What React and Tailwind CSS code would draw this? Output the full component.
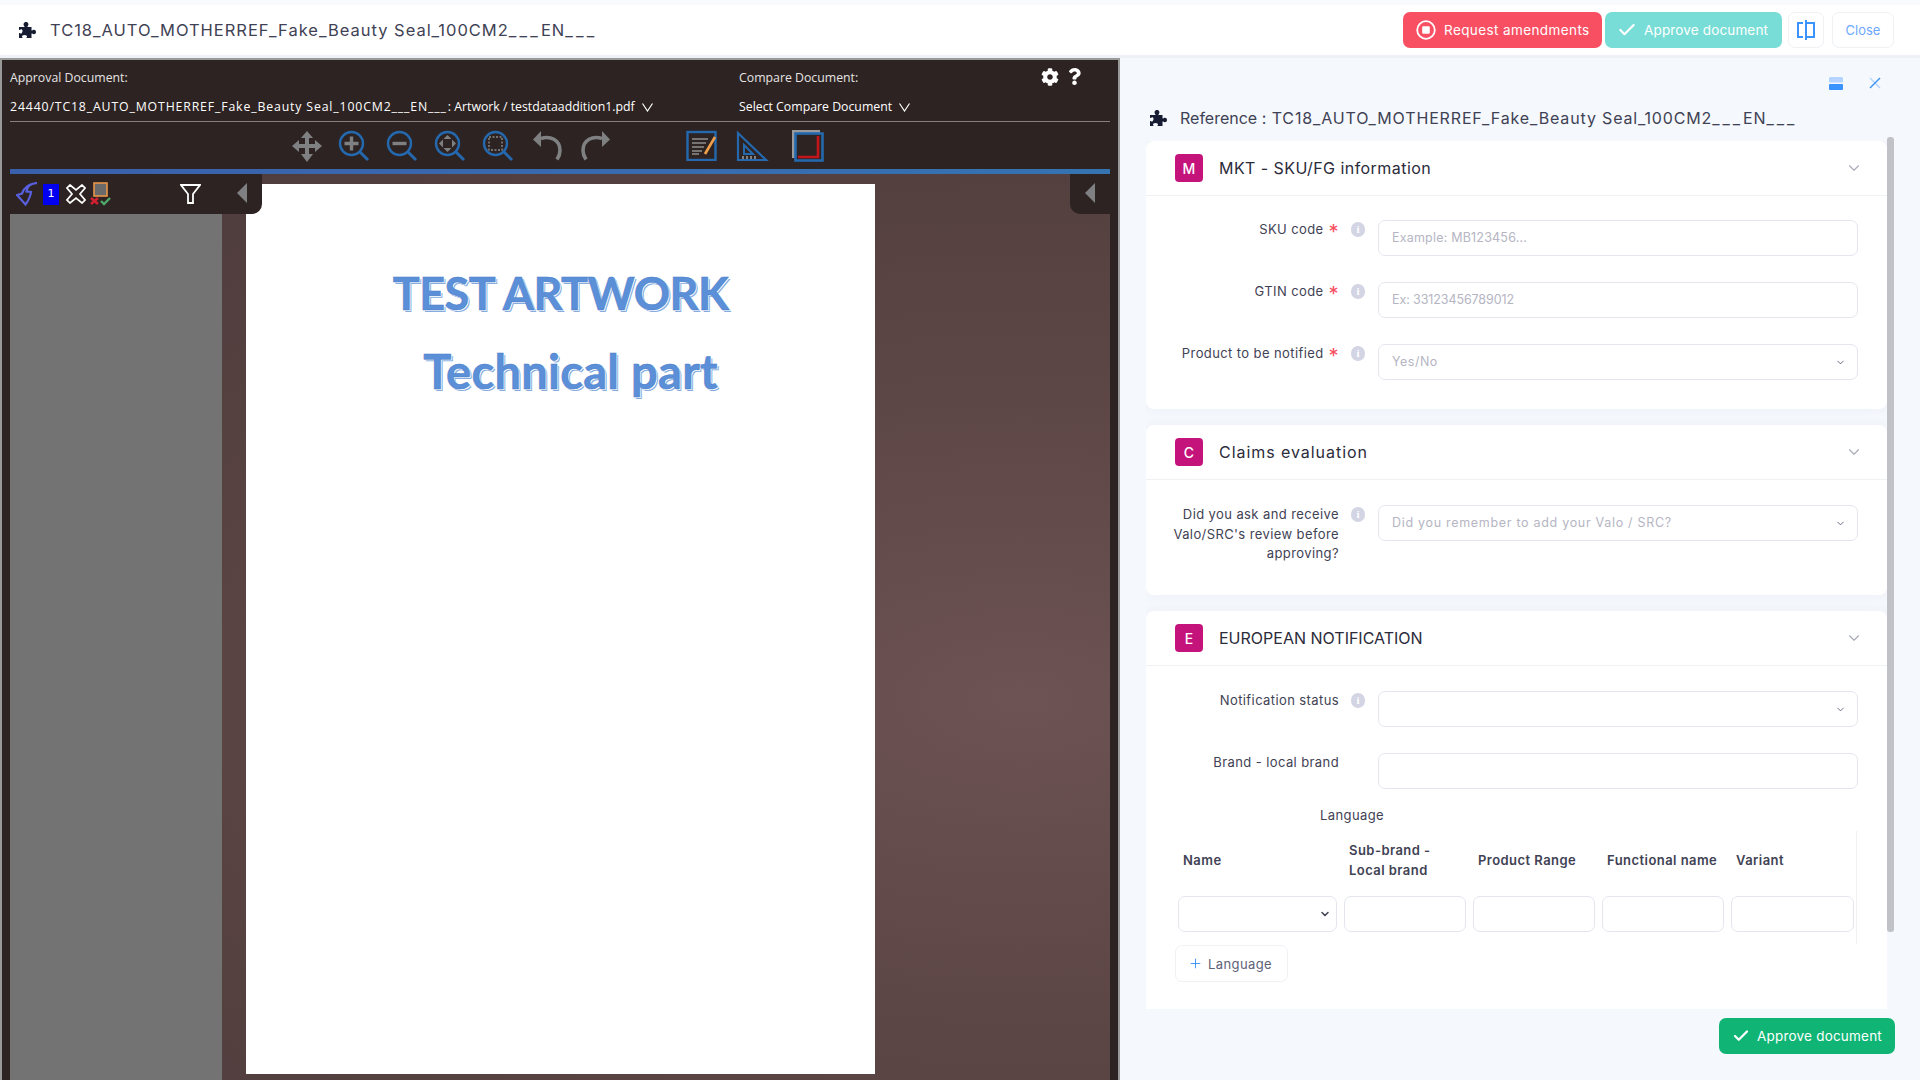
import { FaCog, FaQuestion } from "react-icons/fa";
import { ChevronDown, Check, Plus } from "lucide-react";

function PuzzleIcon({ className = "" }) {
  return (
    <svg width="18" height="18" viewBox="0 0 18 18" fill="#181c32" className={className}>
      <path d="M1 6h5c.6 0 .6-.6.2-1C5 3.800 5.500 1 8 1s3 2.800 1.800 4c-.4.400-.4 1 .2 1h3.500v3c0 .6.600.6 1 .3 1.200-1 3.500-.5 3.500 1.700s-2.300 2.700-3.500 1.700c-.4-.3-1-.3-1 .3V17H9c-.6 0-.6-.6-.2-1 .8-1-.3-2-2.300-2s-3.100 1-2.300 2c.4.400.4 1-.2 1H1v-4.500c0-.6.600-.6 1-.2 1 .8 2.500-.3 2.500-2.300S3 8 2 8.800c-.4.300-1 .3-1-.3z" />
    </svg>
  );
}

function ThinChevron() {
  return (
    <svg width="11" height="9" viewBox="0 0 11 9" fill="none" stroke="#fff" strokeWidth="1.2" className="ml-[7px]">
      <path d="M.5.5l5 7.5 5-7.500" />
    </svg>
  );
}

function MagnifierIcon({ children }) {
  return (
    <svg width="32" height="32" viewBox="0 0 32 32" fill="none">
      <circle cx="13.5" cy="13.5" r="11.5" stroke="#2468ae" strokeWidth="2.4" />
      <path d="M22 22l8 8" stroke="#2468ae" strokeWidth="3" />
      {children}
    </svg>
  );
}

function ToolbarIcons() {
  return (
    <div className="flex h-[47px] items-center pl-[272px]">
      <svg width="32" height="32" viewBox="0 0 32 32" fill="#7f8081" className="mr-[15px] ml-[9px]">
        <path d="M16 1l6 7h-4v6h6v-4l7 6-7 6v-4h-6v6h4l-6 8-6-8h4v-6H8v4l-7-6 7-6v4h6V8h-4z" />
      </svg>
      <MagnifierIcon>
        <path d="M13.5 6.5v14M6.5 13.5h14" stroke="#7f8081" strokeWidth="3.4" />
      </MagnifierIcon>
      <div className="w-[16px]" />
      <MagnifierIcon>
        <path d="M6.5 13.5h14" stroke="#7f8081" strokeWidth="3.4" />
      </MagnifierIcon>
      <div className="w-[16px]" />
      <MagnifierIcon>
        <path d="M13.5 5l4 4h-8zM13.5 22l4-4h-8zM5 13.5l4-4v8zM22 13.5l-4-4v8z" fill="#7f8081" />
      </MagnifierIcon>
      <div className="w-[16px]" />
      <MagnifierIcon>
        <rect x="7" y="7" width="13" height="13" stroke="#8a8a8a" strokeWidth="1.4" strokeDasharray="2 1.5" />
      </MagnifierIcon>
      <div className="w-[18px]" />
      <svg width="31" height="31" viewBox="0 0 31 31" fill="none">
        <path d="M9 8.5c9-3 19 1 19 12 0 3-1 6-3 9" stroke="#7f8081" strokeWidth="3.6" />
        <path d="M1 9.5L9 1v16z" fill="#7f8081" />
      </svg>
      <div className="w-[17px]" />
      <svg width="31" height="31" viewBox="0 0 31 31" fill="none">
        <path d="M22 8.5c-9-3-19 1-19 12 0 3 1 6 3 9" stroke="#7f8081" strokeWidth="3.6" />
        <path d="M30 9.5L22 1v16z" fill="#7f8081" />
      </svg>
      <div className="w-[75px]" />
      <svg width="31" height="31" viewBox="0 0 31 31" fill="none">
        <rect x="1.5" y="2" width="28" height="28" stroke="#2468ae" strokeWidth="2.4" />
        <path d="M6 9h16M6 13h14M6 17h12M6 21h10M6 24h7" stroke="#8f8f8f" strokeWidth="1.6" />
        <path d="M29 7L19 24" stroke="#f0a04b" strokeWidth="2.6" />
      </svg>
      <div className="w-[19px]" />
      <svg width="33" height="32" viewBox="0 0 33 32" fill="none">
        <path d="M2 3v27h28z" stroke="#2468ae" strokeWidth="2.2" />
        <path d="M8 15v9h9z" stroke="#2468ae" strokeWidth="2" />
        <path d="M7 26v3M11 26v3M15 26v3M19 26v3" stroke="#9a9a9a" strokeWidth="1.6" />
      </svg>
      <div className="w-[22px]" />
      <svg width="33" height="33" viewBox="0 0 33 33" fill="none">
        <rect x="1" y="1" width="28" height="28" fill="#9a9a9a" />
        <rect x="4.5" y="4.5" width="27" height="27" fill="#2d2322" stroke="#2468ae" strokeWidth="2.6" />
        <path d="M27 7v21H7" stroke="#c3161c" strokeWidth="2.6" />
      </svg>
    </div>
  );
}

function LeftFlyout() {
  return (
    <div className="absolute top-0 left-0 flex h-[40px] w-[252px] items-center rounded-br-[10px] bg-[#2d2322]">
      <svg width="22" height="24" viewBox="0 0 22 24" fill="none" className="ml-[6px]">
        <path d="M21 1c-6 .5-10 3-10.500 8.500l4.500.5c-.5 5-3 9-5.500 12.500L1 13l5-1.500C8 6 13 1.500 21 1z" stroke="#5860e0" strokeWidth="2.2" />
      </svg>
      <span className="ml-[5px] flex h-[21px] w-[16px] items-center justify-center bg-[#0000f0] font-['DejaVu_Sans'] text-[11px] text-white">
        1
      </span>
      <svg width="20" height="20" viewBox="0 0 20 20" fill="none" className="ml-[7px]">
        <path d="M4 1l6 5 6-5 3 3-5 6 5 6-3 3-6-5-6 5-3-3 5-6-5-6z" stroke="#fff" strokeWidth="1.7" />
      </svg>
      <svg width="22" height="24" viewBox="0 0 22 24" fill="none" className="ml-[4px]">
        <rect x="4" y="1" width="13" height="13" fill="#6a6a6a" stroke="#e89548" strokeWidth="1.6" />
        <path d="M1 16l7 6M8 16l-7 6" stroke="#d01f2f" strokeWidth="2.6" />
        <path d="M11 19l3 3 6-6" stroke="#4fa868" strokeWidth="2.4" />
      </svg>
      <svg width="21" height="20" viewBox="0 0 21 20" fill="none" className="ml-[68px]">
        <path d="M1 1h19l-7 9v9H8v-9z" stroke="#fff" strokeWidth="1.8" />
      </svg>
      <svg width="10" height="20" viewBox="0 0 10 20" className="mb-[3px] ml-[36px]">
        <path d="M10 0v20L0 10z" fill="#7f8081" />
      </svg>
    </div>
  );
}

function DocumentViewer() {
  return (
    <div className="flex w-[1120px] flex-col border-t-2 border-r-2 border-l-2 border-[#9a9a9a] bg-[#2d2322] pr-[8px] pl-[8px]">
      <div className="flex h-[62px] border-b border-[#85807f] font-['Open_Sans',sans-serif] text-[12.3px] text-white">
        <div className="w-[729px]">
          <div className="mt-[8px] h-[20px] leading-[20px] text-[#e5e3e3]">Approval Document:</div>
          <div className="mt-[9px] flex items-center leading-[20px]">
            <span className="tracking-[0.85px]">24440/TC18_AUTO_MOTHERREF_Fake_Beauty Seal_100CM2___EN___</span>
            <span className="ml-[1px]">: Artwork / testdataaddition1.pdf</span>
            <ThinChevron />
          </div>
        </div>
        <div className="w-[302px]">
          <div className="mt-[8px] h-[20px] leading-[20px] text-[#e5e3e3]">Compare Document:</div>
          <div className="mt-[9px] flex items-center leading-[20px]">
            Select Compare Document
            <ThinChevron />
          </div>
        </div>
        <div className="mt-[8px] flex items-start">
          <FaCog size={18} />
          <FaQuestion size={17} className="ml-[7px]" />
        </div>
      </div>
      <ToolbarIcons />
      <div className="h-[5px] bg-gradient-to-r from-[#3a60ab] to-[#3573b1]" />
      <div className="relative flex flex-1 overflow-hidden bg-[radial-gradient(ellipse_at_92%_58%,#6d5353_0%,#5c4545_45%,#4c3a3a_100%)]">
        <div className="mt-[40px] w-[212px] bg-[#737373]" />
        <div className="mt-[10px] ml-[24px] h-[890px] w-[629px] bg-white pt-[86px] font-['Lato',sans-serif] font-bold text-[#5b8fd8] [-webkit-text-stroke:0.5px_#4a7fc8] [text-shadow:1px_1px_0_#fff,2px_2px_0_#86acdf]">
          <p className="text-center text-[45px] leading-[46px] tracking-[-0.5px]">TEST ARTWORK</p>
          <p className="mt-[32px] pl-[20px] text-center text-[47px] leading-[46px] tracking-[0.3px]">Technical part</p>
        </div>
        <LeftFlyout />
        <div className="absolute top-0 right-0 flex h-[40px] w-[40px] items-center rounded-bl-[10px] bg-[#2d2322] pl-[15px]">
          <svg width="10" height="20" viewBox="0 0 10 20" className="mb-[3px]">
            <path d="M10 0v20L0 10z" fill="#7f8081" />
          </svg>
        </div>
      </div>
    </div>
  );
}

function InfoDot() {
  return (
    <span className="mt-[2px] flex h-[15px] w-[14px] shrink-0 items-center justify-center rounded-full bg-[#d3d5e4] font-['Liberation_Serif',serif] text-[11px] font-bold text-white">
      i
    </span>
  );
}

function Field({ label, required, info = true, placeholder, select, placeholderClass = "tracking-[0.2px]" }) {
  return (
    <div className="flex items-start">
      <div className="w-[193px] shrink-0 pl-[18px] text-right text-[13px] leading-[19.5px] tracking-[0.4px] text-[#3f4254]">
        {label}
        {required && (
          <span className="ml-[5px] inline-block h-[12px] align-top text-[20px] leading-[24px] text-[#f64e60]">*</span>
        )}
      </div>
      <div className="ml-[12px] w-[14px] shrink-0">{info && <InfoDot />}</div>
      <div className="ml-[13px] flex h-[36px] w-[480px] items-center justify-between rounded-[7px] border border-[#e4e6ef] bg-white pr-[11px] pl-[13px] text-[12.5px] text-[#b5b5c3]">
        <span className={placeholderClass}>{placeholder}</span>
        {select && <ChevronDown size={11} strokeWidth={2} className="text-[#5e6278]" />}
      </div>
    </div>
  );
}

function Card({ letter, title, height, titleClass, children }) {
  return (
    <div className={`flex shrink-0 flex-col rounded-[8px] bg-white shadow-[0_0_12px_rgba(82,63,105,0.05)] ${height}`}>
      <div className="flex h-[55px] shrink-0 items-center border-b border-[#eff2f5] pr-[24px] pl-[29px]">
        <span className="flex h-[28px] w-[28px] items-center justify-center rounded-[4px] bg-[#c4137b] text-[14px] font-medium text-white">
          {letter}
        </span>
        <span className={`ml-[16px] flex-1 text-[16px] text-[#2b2b3a] ${titleClass}`}>{title}</span>
        <ChevronDown size={18} strokeWidth={1.5} className="text-[#a9abb8]" />
      </div>
      {children}
    </div>
  );
}

function LanguageTable() {
  const headers = [
    { text: "Name", w: "w-[159px]" },
    { text: "Sub-brand - Local brand", w: "w-[122px]", inset: "pr-[20px]" },
    { text: "Product Range", w: "w-[122px]" },
    { text: "Functional name", w: "w-[122px]" },
    { text: "Variant", w: "w-[123px]" },
  ];
  return (
    <div className="ml-[32px] h-[113px] w-[679px] border-r border-[#eff2f5]">
      <div className="flex h-[58px] items-center gap-[7px] text-[13px] leading-[20px] font-semibold tracking-[0.45px] text-[#3f4254]">
        {headers.map((h) => (
          <div key={h.text} className={`${h.w} shrink-0 pl-[5px] ${h.inset ?? "whitespace-nowrap"}`}>
            {h.text}
          </div>
        ))}
      </div>
      <div className="mt-[7px] flex gap-[7px]">
        {headers.map((h, i) => (
          <div
            key={h.text}
            className={`flex h-[36px] items-center justify-end rounded-[7px] border border-[#e4e6ef] bg-white pr-[5px] ${h.w}`}
          >
            {i === 0 && <ChevronDown size={12} strokeWidth={3} className="text-[#3f4254]" />}
          </div>
        ))}
      </div>
    </div>
  );
}

function ReferencePanel() {
  return (
    <div className="relative flex flex-1 flex-col overflow-hidden bg-[#f5f8fd]">
      <div className="flex h-[44px] shrink-0 items-start justify-end pt-[19px] pr-[39px]">
        <svg width="14" height="13" viewBox="0 0 14 13" className="mr-[26px]">
          <rect width="14" height="5.5" rx="1" fill="#b5d4ff" />
          <rect y="7" width="14" height="6" rx="1" fill="#3b93fd" />
        </svg>
        <svg width="12" height="12" viewBox="0 0 12 12" fill="none" strokeWidth="1.4">
          <path d="M1 1l10 10" stroke="#b5d4ff" />
          <path d="M11 1L1 11" stroke="#3b93fd" />
        </svg>
      </div>
      <div className="mb-[7px] flex h-[32px] shrink-0 items-center pl-[29px] text-[16px] tracking-[0.85px] text-[#3f4254]">
        <PuzzleIcon />
        <span className="ml-[13px]">
          <span className="tracking-[0px]">Reference :</span> TC18_AUTO_MOTHERREF_Fake_Beauty Seal_100CM2
          <span className="tracking-[3px]">___</span>EN<span className="tracking-[3px]">___</span>
        </span>
      </div>
      <div className="ml-[26px] flex h-[868px] w-[741px] shrink-0 flex-col gap-[16px] overflow-hidden">
        <Card letter="M" title="MKT - SKU/FG information" height="h-[268px]" titleClass="tracking-[0.45px]">
          <div className="flex flex-col gap-[26px] pt-[24px]">
            <Field label="SKU code" required placeholder="Example: MB123456..." />
            <Field label="GTIN code" required placeholder="Ex: 33123456789012" placeholderClass="tracking-[-0.1px]" />
            <Field label="Product to be notified" required placeholder="Yes/No" select placeholderClass="tracking-[0.5px]" />
          </div>
        </Card>
        <Card letter="C" title="Claims evaluation" height="h-[170px]" titleClass="tracking-[0.95px]">
          <div className="pt-[25px]">
            <Field
              label="Did you ask and receive Valo/SRC's review before approving?"
              placeholder="Did you remember to add your Valo / SRC?"
              placeholderClass="tracking-[0.7px]"
              select
            />
          </div>
        </Card>
        <Card letter="E" title="EUROPEAN NOTIFICATION" height="h-[420px]" titleClass="text-[15.3px]">
          <div className="flex flex-col gap-[26px] pt-[25px]">
            <Field label="Notification status" select />
            <Field label="Brand - local brand" info={false} />
          </div>
          <div className="mt-[16px] mb-[6px] ml-[174px] text-[13px] leading-[20px] tracking-[0.4px] text-[#3f4254]">
            Language
          </div>
          <LanguageTable />
          <button
            type="button"
            className="mt-[1px] ml-[29px] flex h-[37px] w-[113px] items-center rounded-[7px] border border-[#eff2f5] bg-white pt-[2px] pl-[12px] text-[13px] tracking-[0.4px] text-[#5e6278]"
          >
            <Plus size={15} strokeWidth={1.5} className="mr-[5px] mb-[2px] text-[#3b93fd]" />
            Language
          </button>
        </Card>
      </div>
      <div className="flex flex-1 items-start justify-end pt-[9px] pr-[25px]">
        <button
          type="button"
          className="flex h-[36px] w-[176px] items-center justify-center rounded-[7px] bg-[#10b575] text-[13.5px] tracking-[0.2px] text-white"
        >
          <Check size={18} strokeWidth={3} className="mr-[7px]" />
          Approve document
        </button>
      </div>
      <div className="absolute top-[79px] left-[767px] h-[795px] w-[7px] rounded-[3px] bg-[#c0c2c8]" />
    </div>
  );
}

export default function App() {
  return (
    <div className="flex h-screen w-full flex-col overflow-hidden bg-white font-['Inter',sans-serif]">
      <header className="flex h-[58px] shrink-0 items-center border-t-[5px] border-b-[3px] border-t-[#f8fafd] border-b-[#eef1f8] bg-white pr-[26px] pl-[18px]">
        <PuzzleIcon />
        <h1 className="ml-[14px] flex-1 text-[16.5px] tracking-[0.98px] text-[#3f4254]">
          TC18_AUTO_MOTHERREF_Fake_Beauty Seal_100CM2
          <span className="tracking-[3.2px]">___</span>EN<span className="tracking-[3.2px]">___</span>
        </h1>
        <button
          type="button"
          className="flex h-[36px] w-[199px] items-center rounded-[7px] bg-[#f94f63] pl-[13px] text-[13.5px] tracking-[0.4px] text-white"
        >
          <svg width="20" height="20" viewBox="0 0 20 20" fill="none" className="mr-[8px]">
            <circle cx="10" cy="10" r="8.8" stroke="#fff" strokeWidth="1.8" />
            <rect x="6.2" y="6.2" width="7.6" height="7.6" rx="1" fill="#fff" />
          </svg>
          Request amendments
        </button>
        <button
          type="button"
          className="ml-[3px] flex h-[36px] w-[177px] items-center rounded-[7px] bg-[#78ddd6] pl-[12px] text-[13.5px] tracking-[0.15px] text-white"
        >
          <Check size={20} strokeWidth={2.6} className="mr-[7px]" />
          Approve document
        </button>
        <button
          type="button"
          className="ml-[6px] flex h-[36px] w-[36px] items-center justify-center rounded-[7px] border border-[#eff2f5] bg-white"
        >
          <svg width="18" height="20" viewBox="0 0 18 20" fill="none" stroke="#3b93fd" strokeWidth="2">
            <path d="M6 3H1v14h5" />
            <path d="M9 0v20" />
            <path d="M9 3h8v14H9" />
          </svg>
        </button>
        <button
          type="button"
          className="ml-[8px] flex h-[36px] w-[62px] items-center justify-center rounded-[7px] border border-[#eff2f5] bg-white pt-[1px] text-[13px] text-[#6ea8fe]"
        >
          Close
        </button>
      </header>
      <main className="flex min-h-0 flex-1">
        <DocumentViewer />
        <ReferencePanel />
      </main>
    </div>
  );
}
